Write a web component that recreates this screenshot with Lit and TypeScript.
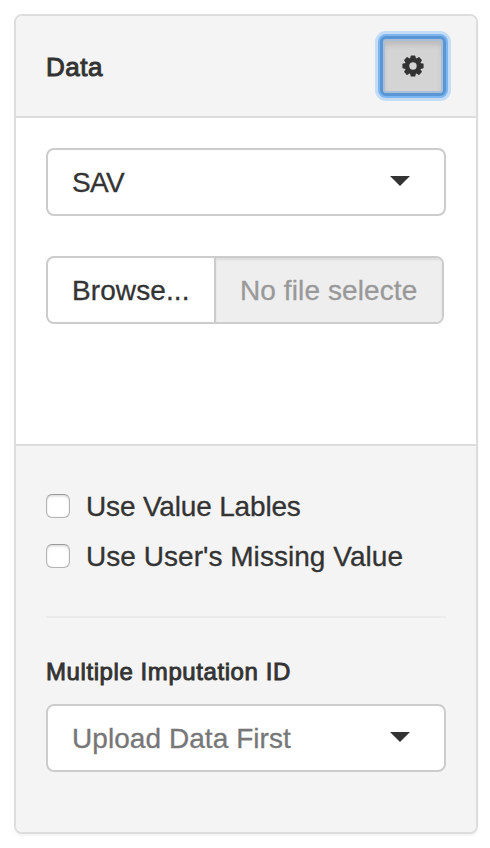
import { LitElement, html, svg, css } from "lit";
import { customElement, property } from "lit/decorators.js";

@customElement("select-field")
class SelectField extends LitElement {
  @property() value = "";
  @property({ type: Boolean, reflect: true }) placeholder = false;

  static styles = css`
    :host {
      display: flex;
      align-items: center;
      justify-content: space-between;
      box-sizing: border-box;
      height: 68px;
      padding: 0 34px 0 24px;
      border: 2px solid #ccc;
      border-radius: 8px;
      background: #fff;
      color: #333;
      letter-spacing: -0.6px;
      -webkit-text-stroke: 0.3px currentColor;
    }
    .value {
      padding-top: 1px;
    }
    :host([placeholder]) .value {
      color: #777;
      letter-spacing: 0.06px;
    }
    .caret {
      width: 20px;
      height: 10px;
      margin-top: -2px;
      background: #333;
      clip-path: polygon(0 0, 100% 0, 50% 100%);
    }
  `;

  render() {
    return html`<span class="value">${this.value}</span><span class="caret"></span>`;
  }
}

@customElement("check-option")
class CheckOption extends LitElement {
  @property() label = "";

  static styles = css`
    :host {
      display: flex;
      align-items: center;
      height: 40px;
      gap: 16px;
      letter-spacing: 0.04px;
      -webkit-text-stroke: 0.3px #333;
    }
    .box {
      box-sizing: border-box;
      width: 24px;
      height: 24px;
      border: 1px solid #b4b4b4;
      border-top-color: #999;
      border-radius: 6px;
      background: #fff;
      box-shadow: inset 0 2px 2px rgba(0, 0, 0, 0.1), inset 0 0 1px rgba(0, 0, 0, 0.25);
    }
    .text {
      padding-top: 1px;
    }
  `;

  render() {
    return html`<span class="box"></span><span class="text">${this.label}</span>`;
  }
}

@customElement("app-root")
class AppRoot extends LitElement {
  static styles = css`
    :host {
      display: block;
      box-sizing: border-box;
      height: 848px;
      padding: 14px 12px 14px 14px;
      background: #fff;
      color: #333;
      font: 28px/40px "Liberation Sans", Arial, sans-serif;
    }
    .panel {
      box-sizing: border-box;
      height: 820px;
      display: flex;
      flex-direction: column;
      border: 2px solid #ddd;
      border-radius: 8px;
      background: #fff;
      box-shadow: 0 2px 2px rgba(0, 0, 0, 0.05);
      overflow: hidden;
    }
    .heading {
      display: flex;
      align-items: center;
      justify-content: space-between;
      box-sizing: border-box;
      height: 102px;
      padding: 0 30px;
      border-bottom: 2px solid #ddd;
      background: #f4f4f4;
    }
    .title {
      padding-top: 2px;
      font-size: 26px;
      letter-spacing: 0.5px;
      -webkit-text-stroke: 1px #333;
    }
    .gear {
      display: flex;
      align-items: center;
      justify-content: center;
      box-sizing: border-box;
      width: 66px;
      height: 60px;
      padding: 0;
      border: 3px solid #5a95d4;
      border-radius: 6px;
      outline: none;
      background: #d4d4d4;
      box-shadow: 0 0 0 2px #7db5f2, 0 0 0 5px #c5dcf5,
        inset 0 0 0 2px #a9bfd7, inset 0 5px 6px rgba(0, 0, 0, 0.14);
    }
    .gear svg {
      display: block;
    }
    .body {
      box-sizing: border-box;
      height: 326px;
      padding: 30px;
      display: flex;
      flex-direction: column;
      gap: 40px;
    }
    .file {
      display: flex;
      box-sizing: border-box;
      width: 398px;
      height: 68px;
      border: 2px solid #ccc;
      border-radius: 8px;
      overflow: hidden;
      line-height: 66px;
    }
    .browse {
      box-sizing: border-box;
      width: 168px;
      padding-left: 24px;
      border-right: 2px solid #ccc;
      letter-spacing: 0.1px;
      -webkit-text-stroke: 0.3px #333;
    }
    .filename {
      flex: 1;
      padding-left: 24px;
      background: #eee;
      color: #999;
      letter-spacing: 0.1px;
      white-space: nowrap;
      -webkit-text-stroke: 0.3px #999;
      box-shadow: inset 0 2px 2px rgba(0, 0, 0, 0.075);
    }
    .footer {
      flex: 1;
      padding: 40px 30px 0;
      border-top: 2px solid #ddd;
      background: #f4f4f4;
    }
    .options {
      display: flex;
      flex-direction: column;
      gap: 10px;
    }
    .narrow {
      letter-spacing: -0.17px;
    }
    .rule {
      height: 2px;
      margin: 40px 0 36px;
      background: #ebebeb;
    }
    .label {
      height: 36px;
      margin-bottom: 14px;
      font-size: 24px;
      line-height: 36px;
      letter-spacing: 0.58px;
      -webkit-text-stroke: 0.9px #333;
    }
  `;

  render() {
    return html`
      <section class="panel">
        <header class="heading">
          <span class="title">Data</span>
          <button class="gear" aria-label="Settings">
            <svg width="22" height="22" viewBox="-11 -11 22 22">
              <circle r="6" fill="none" stroke="#333" stroke-width="4.6" />
              ${[0, 45, 90, 135, 180, 225, 270, 315].map(
                (angle) => svg`<path transform="rotate(${angle})" fill="#333" d="M-3-6.5L-2.4-10Q-2.2-10.6-1.6-10.6H1.6Q2.2-10.6 2.4-10L3-6.5Z" />`
              )}
            </svg>
          </button>
        </header>
        <div class="body">
          <select-field value="SAV"></select-field>
          <div class="file">
            <span class="browse">Browse...</span>
            <span class="filename">No file selecte</span>
          </div>
        </div>
        <div class="footer">
          <div class="options">
            <check-option class="narrow" label="Use Value Lables"></check-option>
            <check-option label="Use User's Missing Value"></check-option>
          </div>
          <div class="rule"></div>
          <div class="label">Multiple Imputation ID</div>
          <select-field placeholder value="Upload Data First"></select-field>
        </div>
      </section>
    `;
  }
}
